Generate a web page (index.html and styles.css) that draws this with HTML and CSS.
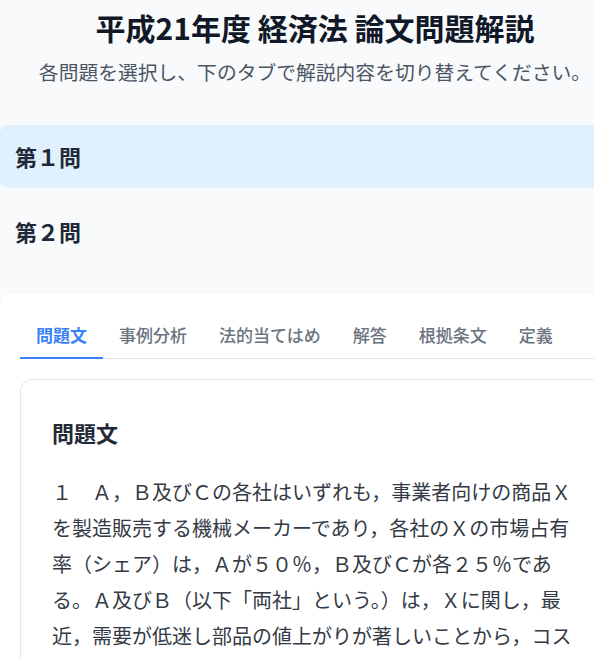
FILE: index.html
```html
<!DOCTYPE html>
<html lang="ja">
<head>
<meta charset="utf-8">
<title>平成21年度 経済法 論文問題解説</title>
<link rel="stylesheet" href="styles.css">
</head>
<body>
<div class="page">
  <header class="header">
    <h1 class="title">平成21年度 経済法 論文問題解説</h1>
    <p class="subtitle">各問題を選択し、下のタブで解説内容を切り替えてください。</p>
  </header>

  <nav class="questions">
    <div class="question question-active">第１問</div>
    <div class="question">第２問</div>
  </nav>

  <section class="card">
    <div class="tabs">
      <div class="tab tab-active">問題文</div>
      <div class="tab">事例分析</div>
      <div class="tab">法的当てはめ</div>
      <div class="tab">解答</div>
      <div class="tab">根拠条文</div>
      <div class="tab">定義</div>
    </div>
    <div class="panel">
      <h2 class="panel-title">問題文</h2>
      <p class="panel-text">１　Ａ，Ｂ及びＣの各社はいずれも，事業者向けの商品Ｘを製造販売する機械メーカーであり，各社のＸの市場占有率（シェア）は，Ａが５０％，Ｂ及びＣが各２５％である。Ａ及びＢ（以下「両社」という。）は，Ｘに関し，最近，需要が低迷し部品の値上がりが著しいことから，コスト削減を図るため，共同して部品を調達することを検討している。</p>
    </div>
  </section>
</div>
</body>
</html>
```

FILE: styles.css
```css
html {
  overflow-x: hidden;
}

body {
  margin: 0;
  background: #f9fafb;
  color: #1f2937;
  font-family: "Noto Sans CJK JP", "Noto Sans", sans-serif;
}

.page {
  width: 630px;
}

.header {
  text-align: center;
  padding-top: 9px;
  margin-bottom: 39px;
}

.title {
  margin: 0;
  font-size: 30px;
  line-height: 36px;
  font-weight: 700;
  color: #111827;
}

.subtitle {
  margin: 13px 0 0;
  font-size: 19.8px;
  line-height: 28px;
  color: #4b5563;
}

.questions {
  display: flex;
  flex-direction: column;
  gap: 12px;
  margin-bottom: 30px;
}

.question {
  padding: 16px 15px;
  font-size: 22px;
  line-height: 31px;
  font-weight: 700;
  color: #1f2937;
  border-radius: 8px;
}

.question-active {
  background: #e0f0fd;
}

.card {
  background: #ffffff;
  border-radius: 12px;
  box-shadow: 0 1px 3px rgba(0, 0, 0, 0.06);
  padding: 20px 20px 32px;
}

.tabs {
  display: flex;
  border-bottom: 1px solid #e5e7eb;
  margin-bottom: 20px;
}

.tab {
  padding: 10px 16px 10px;
  font-size: 17px;
  line-height: 24px;
  font-weight: 500;
  color: #6b7280;
  border-bottom: 2px solid transparent;
  margin-bottom: -1px;
}

.tab-active {
  color: #3b82f6;
  font-weight: 700;
  border-bottom-color: #3b82f6;
}

.panel {
  border: 1px solid #e5e7eb;
  border-radius: 12px;
  padding: 38px 31px 32px;
}

.panel-title {
  margin: 0 0 28px;
  font-size: 22px;
  line-height: 28px;
  font-weight: 700;
  color: #1f2937;
}

.panel-text {
  margin: 0;
  font-size: 20px;
  line-height: 36px;
  color: #333a45;
}
```
